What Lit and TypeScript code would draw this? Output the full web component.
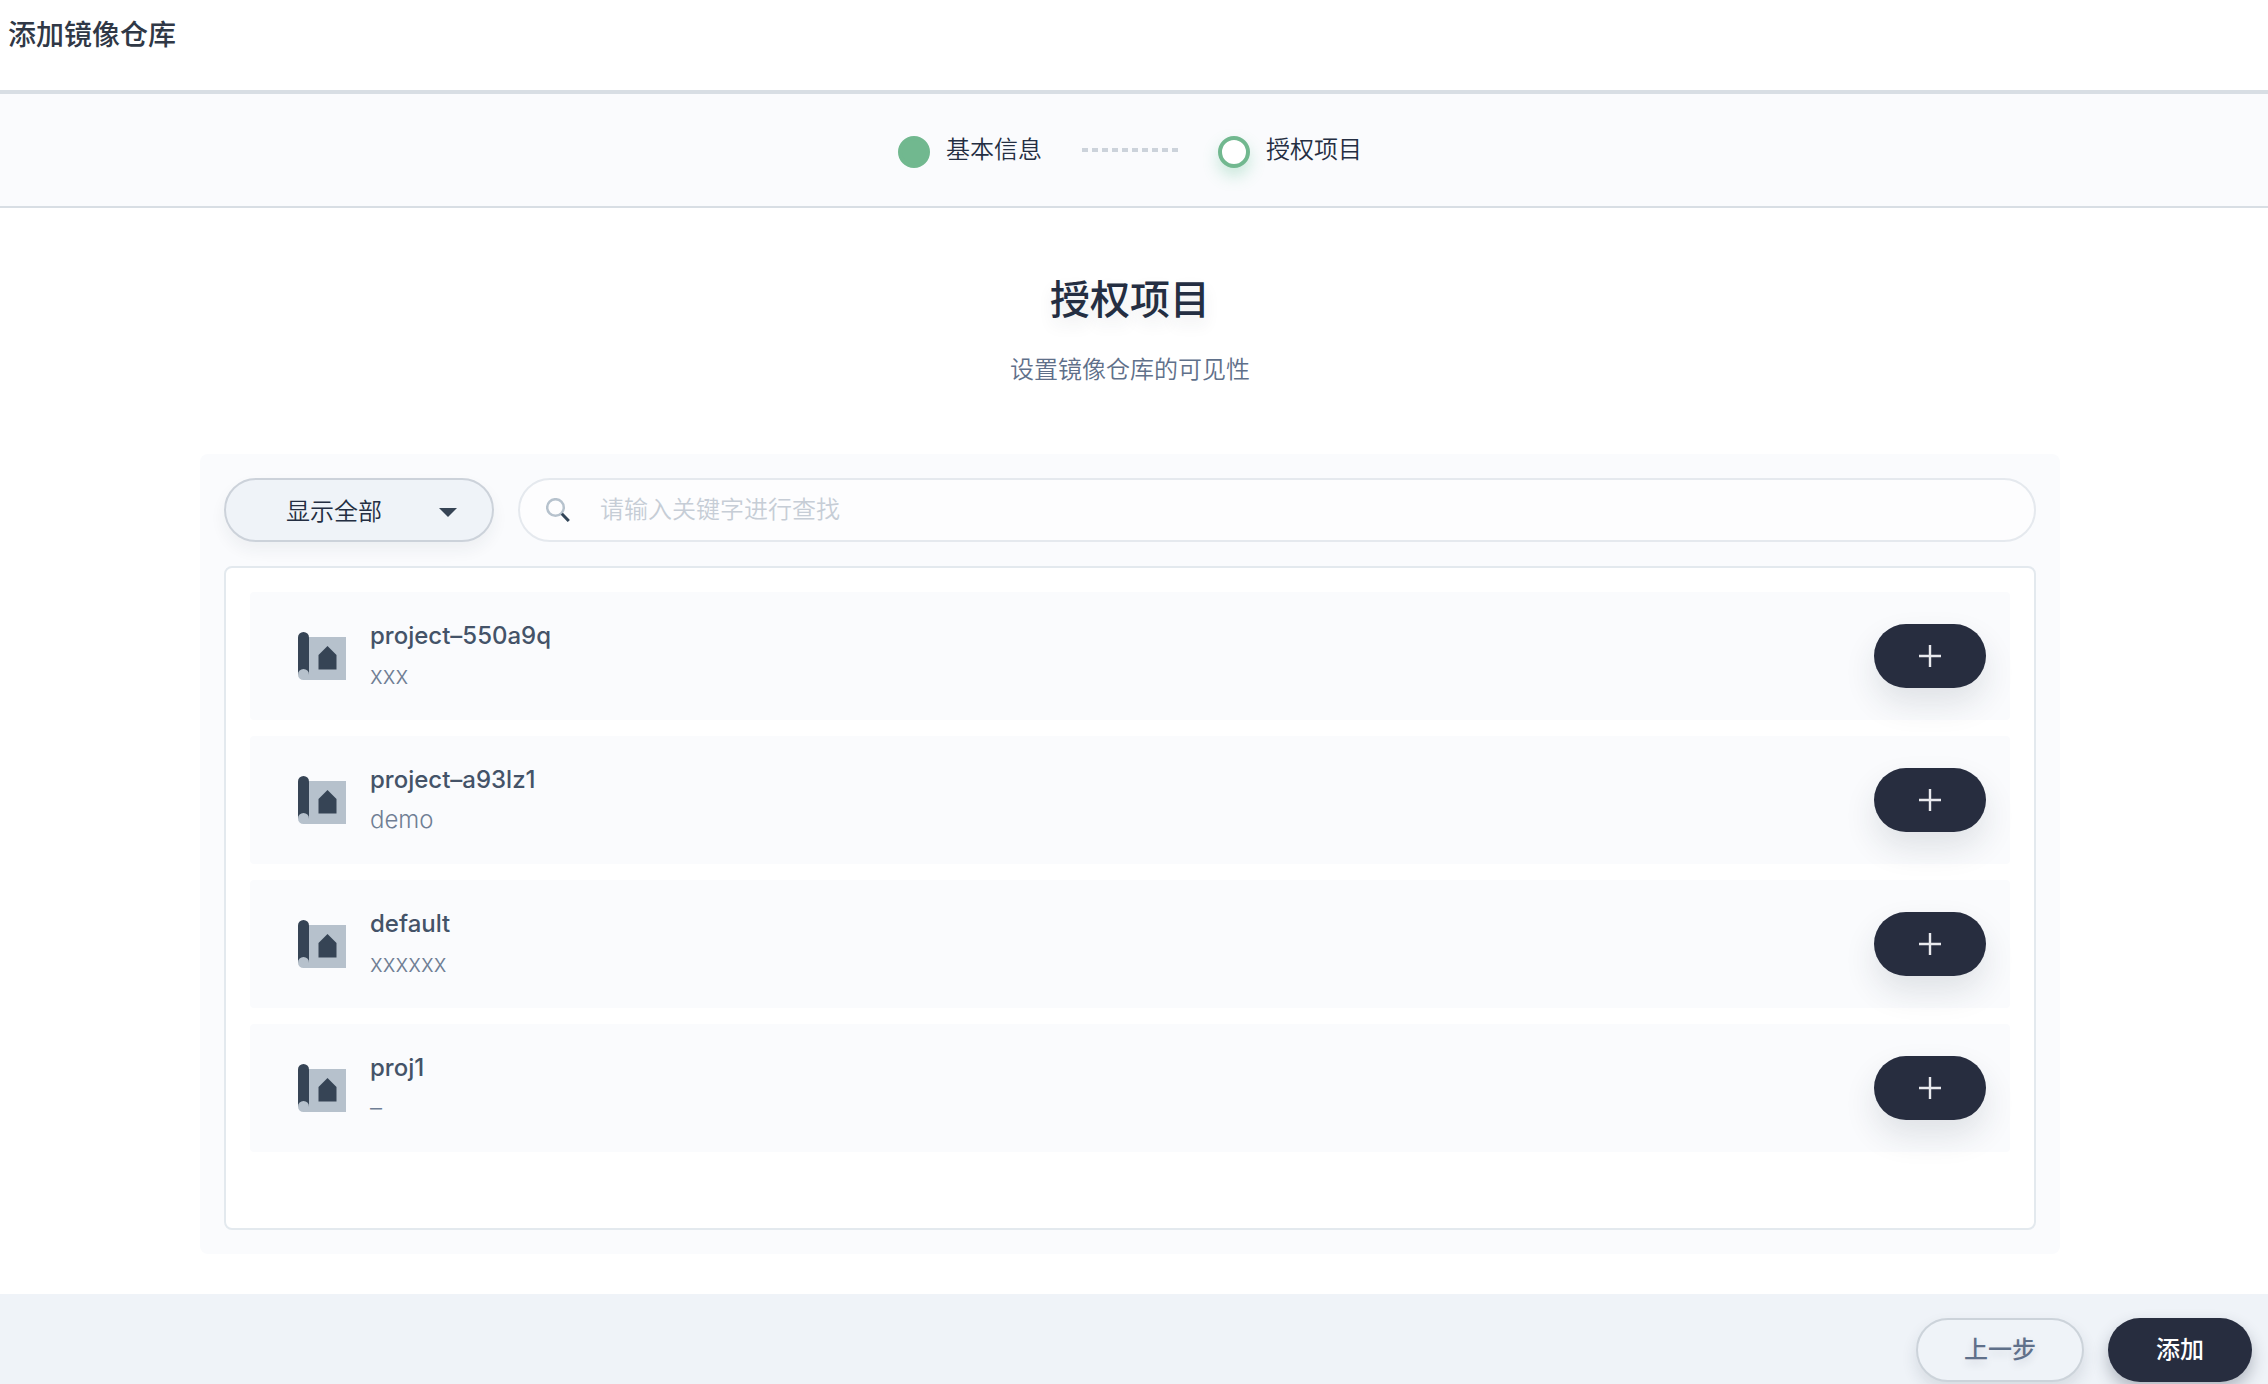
import { LitElement, css, html, svg } from "lit";
import { customElement, property, state } from "lit/decorators.js";

interface Project {
  name: string;
  description: string;
}

const projects: Project[] = [
  { name: "project–550a9q", description: "xxx" },
  { name: "project–a93lz1", description: "demo" },
  { name: "default", description: "xxxxxx" },
  { name: "proj1", description: "–" },
];

const blueprint = svg`
  <path d="M5 5h43v43H5z" fill="#b6c1cc" />
  <path d="M0 5.5a5.5 5.5 0 0 1 11 0V43H0z" fill="#364455" />
  <path d="M0 42.5a5.5 5.5 0 0 1 11 0V48H5.500A5.5 5.500 0 0 1 0 42.500z" fill="#b6c1cc" />
  <path d="M20.500 23 29.500 14l9 9v14.500h-18z" fill="#364455" />
`;

@customElement("project-row")
class ProjectRow extends LitElement {
  @property({ attribute: false }) project!: Project;

  static styles = css`
    :host {
      display: flex;
      align-items: center;
      gap: 24px;
      padding: 24px 24px 24px 48px;
      border-radius: 4px;
      background: #fafbfd;
    }
    .icon {
      width: 48px;
      height: 48px;
      flex: none;
    }
    .text {
      flex: 1;
      min-width: 0;
      line-height: 40px;
    }
    .name {
      margin: 0;
      font-size: 24px;
      font-weight: 500;
      color: #445368;
    }
    .description {
      margin: 0;
      font-size: 24px;
      font-weight: 300;
      color: #6f7e94;
    }
    .add {
      display: flex;
      align-items: center;
      justify-content: center;
      flex: none;
      width: 112px;
      height: 64px;
      padding: 0;
      border: 0;
      border-radius: 32px;
      background: #272d3f;
      box-shadow: 0 16px 32px rgba(36, 46, 66, 0.12);
      cursor: pointer;
    }
    .plus {
      width: 22px;
      height: 22px;
    }
  `;

  render() {
    return html`
      <svg class="icon" viewBox="0 0 48 48" aria-hidden="true">${blueprint}</svg>
      <div class="text">
        <h3 class="name">${this.project.name}</h3>
        <p class="description">${this.project.description}</p>
      </div>
      <button class="add" type="button" aria-label=${this.project.name}>
        <svg class="plus" viewBox="0 0 22 22" aria-hidden="true">
          <path d="M11 0v22M0 11h22" fill="none" stroke="#e9eaee" stroke-width="2.400" />
        </svg>
      </button>
    `;
  }
}

@customElement("app-root")
class AppRoot extends LitElement {
  @state() private keyword = "";

  static styles = css`
    :host {
      display: flex;
      flex-direction: column;
      min-height: 100vh;
      font-family: Inter, "Noto Sans CJK SC", sans-serif;
      font-size: 24px;
      font-weight: 350;
      line-height: 36px;
      color: #242e42;
      background: #fff;
    }
    * {
      box-sizing: border-box;
    }
    .header {
      padding: 16px 8px 36px;
      border-bottom: 4px solid #d8dee4;
    }
    .page-title {
      margin: 0;
      font-size: 28px;
      line-height: 38px;
      font-weight: 500;
      color: #303846;
    }
    .steps {
      display: flex;
      align-items: center;
      justify-content: center;
      gap: 40px;
      height: 114px;
      margin: 0;
      padding: 0 8px 0 0;
      list-style: none;
      background: #fafbfd;
      border-bottom: 2px solid #d8dee4;
    }
    .step {
      display: flex;
      align-items: center;
      gap: 16px;
    }
    .dot {
      width: 32px;
      height: 32px;
      margin-top: 4px;
      border: 4px solid #71b88f;
      border-radius: 50%;
      background: #71b88f;
    }
    .dot.current {
      background: #fff;
      box-shadow: 0 8px 16px rgba(85, 188, 138, 0.3);
    }
    .dashes {
      width: 96px;
      height: 4px;
      background: repeating-linear-gradient(90deg, #ccd3db 0 6px, transparent 6px 10px);
    }
    .main {
      flex: 1;
      display: flex;
      flex-direction: column;
      padding: 64px 208px 40px 200px;
    }
    .title {
      margin: 0;
      font-size: 40px;
      line-height: 56px;
      font-weight: 500;
      text-align: center;
      text-shadow: 0 8px 16px rgba(36, 46, 66, 0.1);
    }
    .subtitle {
      margin: 24px 0 66px;
      text-align: center;
      color: #5f708a;
    }
    .panel {
      flex: 1;
      display: flex;
      flex-direction: column;
      gap: 24px;
      padding: 24px;
      border-radius: 8px;
      background: #fafbfd;
    }
    .filters {
      display: flex;
      gap: 24px;
    }
    .scope {
      display: grid;
      align-items: center;
      width: 270px;
      height: 64px;
    }
    .scope-select {
      grid-area: 1 / 1;
      width: 100%;
      height: 100%;
      margin: 0;
      padding: 4px 72px 0 60px;
      appearance: none;
      border: 2px solid #ccd2da;
      border-radius: 32px;
      background: #eff3f8;
      box-shadow: 0 8px 16px rgba(36, 46, 66, 0.06);
      font: inherit;
      color: #242e42;
    }
    .caret {
      grid-area: 1 / 1;
      justify-self: end;
      width: 18px;
      height: 9px;
      margin-right: 37px;
      margin-top: 4px;
      pointer-events: none;
    }
    .search {
      flex: 1;
      display: flex;
      align-items: center;
      gap: 30px;
      height: 64px;
      padding: 0 26px;
      border: 2px solid #e5e9ee;
      border-radius: 32px;
      background: #fdfdfe;
    }
    .magnifier {
      width: 24px;
      height: 24px;
      flex: none;
    }
    .search-input {
      flex: 1;
      min-width: 0;
      padding: 0;
      border: 0;
      outline: 0;
      background: none;
      font: inherit;
      color: #242e42;
    }
    .search-input::placeholder {
      color: #c6cdd6;
      opacity: 1;
    }
    .list {
      flex: 1;
      display: flex;
      flex-direction: column;
      gap: 16px;
      margin: 0;
      padding: 24px;
      border: 2px solid #e3e9ee;
      border-radius: 8px;
      background: #fff;
      list-style: none;
    }
    .footer {
      display: flex;
      justify-content: flex-end;
      gap: 24px;
      padding: 24px 16px 2px;
      background: #eff3f8;
      overflow: hidden;
    }
    .action {
      height: 64px;
      padding: 0 48px;
      border: 0;
      border-radius: 32px;
      font: inherit;
      font-weight: 500;
      cursor: pointer;
    }
    .action.back {
      padding: 0 46px;
      border: 2px solid #ccd3da;
      background: #eff3f8;
      color: #5f708a;
      box-shadow: 0 8px 16px rgba(36, 46, 66, 0.12);
      text-shadow: 0 4px 8px rgba(36, 46, 66, 0.14);
    }
    .action.submit {
      background: #272d3f;
      color: #fff;
      box-shadow: 0 8px 16px rgba(36, 46, 66, 0.3);
    }
  `;

  private onSearch(event: Event) {
    this.keyword = (event.target as HTMLInputElement).value;
  }

  render() {
    const visible = projects.filter((project) => project.name.includes(this.keyword));
    return html`
      <header class="header"><h1 class="page-title">添加镜像仓库</h1></header>
      <ol class="steps">
        <li class="step"><span class="dot"></span>基本信息</li>
        <li class="dashes" aria-hidden="true"></li>
        <li class="step" aria-current="step"><span class="dot current"></span>授权项目</li>
      </ol>
      <main class="main">
        <h2 class="title">授权项目</h2>
        <p class="subtitle">设置镜像仓库的可见性</p>
        <section class="panel">
          <div class="filters">
            <div class="scope">
              <select class="scope-select" aria-label="显示全部">
                <option>显示全部</option>
              </select>
              <svg class="caret" viewBox="0 0 18 9" aria-hidden="true">
                <path d="M0 0h18L9 9z" fill="#364455" />
              </svg>
            </div>
            <label class="search">
              <svg class="magnifier" viewBox="0 0 24 24" fill="none" aria-hidden="true">
                <circle cx="9.500" cy="9.500" r="8.300" stroke="#b6c2cd" stroke-width="2.500" />
                <path d="m15.800 15.800 7 7.200" stroke="#324558" stroke-width="3" />
              </svg>
              <input
                class="search-input"
                type="text"
                aria-label="请输入关键字进行查找"
                placeholder="请输入关键字进行查找"
                .value=${this.keyword}
                @input=${this.onSearch}
              />
            </label>
          </div>
          <ul class="list">
            ${visible.map((project) => html`<li><project-row .project=${project}></project-row></li>`)}
          </ul>
        </section>
      </main>
      <footer class="footer">
        <button class="action back" type="button">上一步</button>
        <button class="action submit" type="button">添加</button>
      </footer>
    `;
  }
}
